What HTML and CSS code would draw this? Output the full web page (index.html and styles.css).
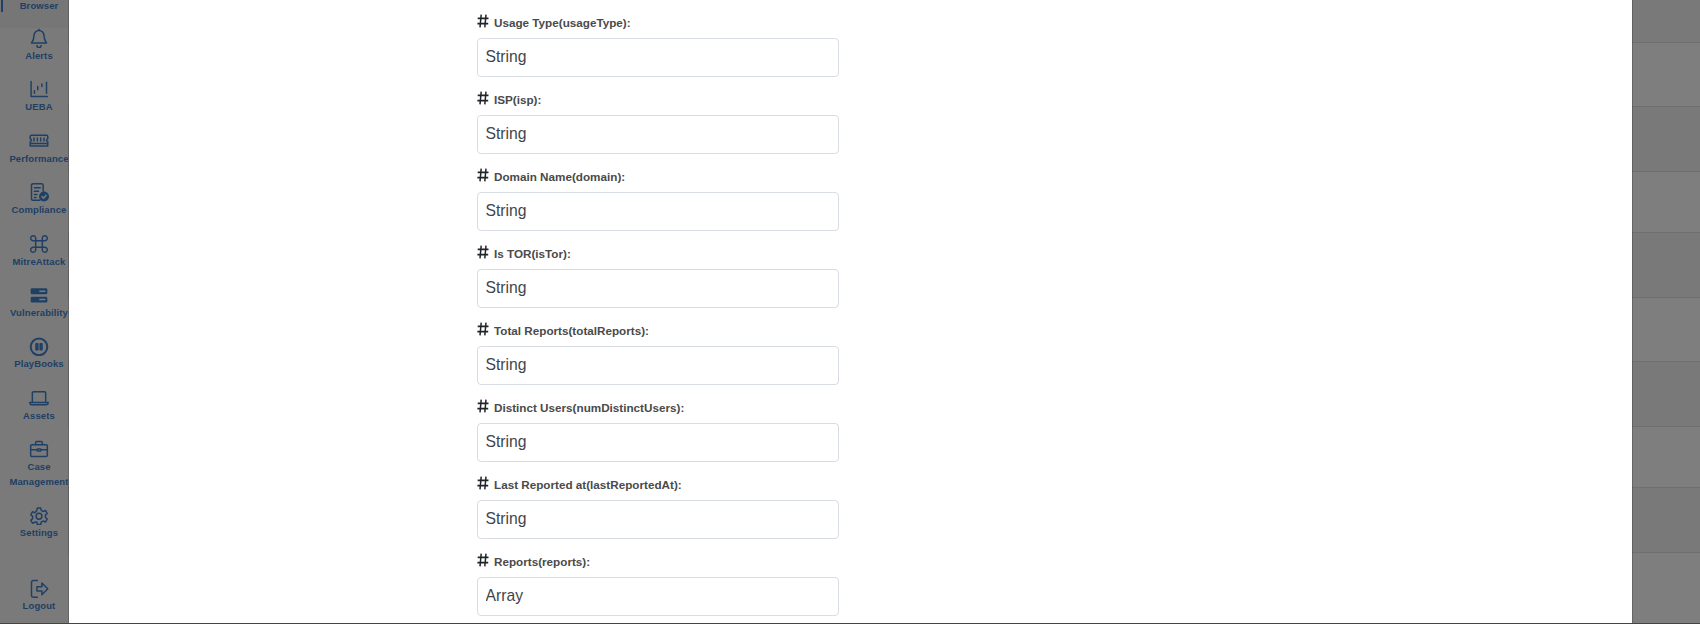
FILE: index.html
```html
<!DOCTYPE html>
<html lang="en">
<head>
<meta charset="utf-8">
<title>Fields</title>
<link rel="stylesheet" href="styles.css">
</head>
<body>
<div class="app">
  <nav class="sidebar">
    <div class="active-bar"></div>
    <a class="nav-item nav-browser"><span>Browser</span></a>
    <a class="nav-item"><svg viewBox="0 0 24 24"><path d="M12 3a6 6 0 0 0-6 6c0 5-1.500 7-3 9h18c-1.500-2-3-4-3-9a6 6 0 0 0-6-6zM12 1.500V3M9.500 21a2.500 2.500 0 0 0 5 0"/></svg><span>Alerts</span></a>
    <a class="nav-item"><svg viewBox="0 0 24 24"><path d="M2.500 3v18h19.500M21 4v13M15.500 6v3M10.500 9v4M6.500 14v3" /></svg><span>UEBA</span></a>
    <a class="nav-item"><svg viewBox="0 0 24 24"><path d="M3 5h18a1.500 1.500 0 0 1 1.500 1.500v3a1.500 1.500 0 0 0 0 3V18H1.500v-5.500a1.500 1.500 0 0 0 0-3v-3A1.500 1.500 0 0 1 3 5zM1.500 15h21M6 8.500V12M10 8.500V12M14 8.500V12M18 8.500V12"/></svg><span>Performance</span></a>
    <a class="nav-item"><svg viewBox="0 0 24 24"><path d="M13 22H5a2 2 0 0 1-2-2V4a2 2 0 0 1 2-2h10a2 2 0 0 1 2 2v7M6.500 7h7M6.500 11h5M6.500 15h3M6.500 18.500h2"/><circle class="fill" cx="18" cy="17.500" r="6"/><path class="knock" d="M15.500 17.500l2 2 3-3.500"/></svg><span>Compliance</span></a>
    <a class="nav-item"><svg viewBox="0 0 24 24"><path d="M8 8h8v8H8zM8 8H5.500A3 3 0 1 1 8 5.500zM16 8V5.500A3 3 0 1 1 18.500 8zM16 16h2.500a3 3 0 1 1-2.500 2.500zM8 16v2.500A3 3 0 1 1 5.500 16z"/></svg><span>MitreAttack</span></a>
    <a class="nav-item"><svg viewBox="0 0 24 24"><rect class="fill" x="2" y="4" width="20" height="7" rx="1.500"/><rect class="fill" x="2" y="14" width="20" height="7" rx="1.500"/><path class="knock" d="M13 7.500h6M13 17.500h6"/></svg><span>Vulnerability</span></a>
    <a class="nav-item"><svg viewBox="0 -1 24 24"><circle class="thick" cx="12" cy="12" r="10"/><rect class="fill" x="7.500" y="7.500" width="4" height="9" rx="1"/><rect class="fill" x="12.500" y="7.500" width="4" height="9" rx="1"/></svg><span>PlayBooks</span></a>
    <a class="nav-item"><svg viewBox="0 0 24 24"><path d="M4 17V6a1.500 1.500 0 0 1 1.500-1.500h13A1.500 1.500 0 0 1 20 6v11M1 17.500h22V18a2 2 0 0 1-2 2H3a2 2 0 0 1-2-2z"/></svg><span>Assets</span></a>
    <a class="nav-item nav-case"><svg viewBox="0 0 24 24"><path d="M3.500 7h17A1.500 1.500 0 0 1 22 8.500v11a1.500 1.500 0 0 1-1.500 1.500h-17A1.500 1.500 0 0 1 2 19.500v-11A1.500 1.500 0 0 1 3.500 7zM8 7V4.500A1.500 1.500 0 0 1 9.500 3h5A1.500 1.500 0 0 1 16 4.500V7M2 13h8M14 13h8M10 12h4v2.500h-4z"/></svg><span>Case<br>Management</span></a>
    <a class="nav-item"><svg viewBox="0 -1.500 24 24"><circle cx="12" cy="12" r="3.500"/><path d="M10 2h4l.6 3 2.400 1.200 2.900-1 2 3.500-2.300 2 .1 1.300-.1 1.300 2.300 2-2 3.500-2.900-1-2.400 1.200-.6 3h-4l-.6-3L7 19.300l-2.900 1-2-3.500 2.300-2-.1-1.300.1-1.300-2.300-2 2-3.500 2.900 1L9.400 5z"/></svg><span>Settings</span></a>
    <a class="nav-item nav-logout"><svg viewBox="0 -1 24 24"><path d="M10 2H5a2 2 0 0 0-2 2v16a2 2 0 0 0 2 2h5M9.500 9.500h6V5l7 7-7 7v-4.500h-6z"/></svg><span>Logout</span></a>
  </nav>
  <main class="content">
    <div class="row row-a h1"></div>
    <div class="row row-b h2"></div>
    <div class="row row-a h3"></div>
    <div class="row row-b h4"></div>
    <div class="row row-a h3"></div>
    <div class="row row-b h1b"></div>
    <div class="row row-a h3"></div>
    <div class="row row-b h5"></div>
    <div class="row row-a h3"></div>
    <div class="row row-b h6"></div>
  </main>
</div>
<div class="backdrop"></div>
<section class="modal">
  <form class="form">
    <div class="field"><label class="label"><svg class="hash" viewBox="0 0 12 12" preserveAspectRatio="none"><path d="M4.200.5L3 11.500M9 .5L7.800 11.500M.7 3.800h10.800M.4 8.200h10.800"/></svg>Usage Type(usageType):</label><input class="input" value="String"></div>
    <div class="field"><label class="label"><svg class="hash" viewBox="0 0 12 12" preserveAspectRatio="none"><path d="M4.200.5L3 11.500M9 .5L7.800 11.500M.7 3.800h10.800M.4 8.200h10.800"/></svg>ISP(isp):</label><input class="input" value="String"></div>
    <div class="field"><label class="label"><svg class="hash" viewBox="0 0 12 12" preserveAspectRatio="none"><path d="M4.200.5L3 11.500M9 .5L7.800 11.500M.7 3.800h10.800M.4 8.200h10.800"/></svg>Domain Name(domain):</label><input class="input" value="String"></div>
    <div class="field"><label class="label"><svg class="hash" viewBox="0 0 12 12" preserveAspectRatio="none"><path d="M4.200.5L3 11.500M9 .5L7.800 11.500M.7 3.800h10.800M.4 8.200h10.800"/></svg>Is TOR(isTor):</label><input class="input" value="String"></div>
    <div class="field"><label class="label"><svg class="hash" viewBox="0 0 12 12" preserveAspectRatio="none"><path d="M4.200.5L3 11.500M9 .5L7.800 11.500M.7 3.800h10.800M.4 8.200h10.800"/></svg>Total Reports(totalReports):</label><input class="input" value="String"></div>
    <div class="field"><label class="label"><svg class="hash" viewBox="0 0 12 12" preserveAspectRatio="none"><path d="M4.200.5L3 11.500M9 .5L7.800 11.500M.7 3.800h10.800M.4 8.200h10.800"/></svg>Distinct Users(numDistinctUsers):</label><input class="input" value="String"></div>
    <div class="field"><label class="label"><svg class="hash" viewBox="0 0 12 12" preserveAspectRatio="none"><path d="M4.200.5L3 11.500M9 .5L7.800 11.500M.7 3.800h10.800M.4 8.200h10.800"/></svg>Last Reported at(lastReportedAt):</label><input class="input" value="String"></div>
    <div class="field"><label class="label"><svg class="hash" viewBox="0 0 12 12" preserveAspectRatio="none"><path d="M4.200.5L3 11.500M9 .5L7.800 11.500M.7 3.800h10.800M.4 8.200h10.800"/></svg>Reports(reports):</label><input class="input" value="Array"></div>
  </form>
</section>
<div class="page-edge"></div>
</body>
</html>
```
FILE: styles.css
```css
* { box-sizing: border-box; }
html, body { margin: 0; height: 624px; overflow: hidden; background: #fff; }
body { font-family: "Liberation Sans", Arial, sans-serif; }

.app { display: flex; height: 624px; }

.sidebar {
  position: relative;
  width: 68px;
  flex: none;
  height: 624px;
  background: #f5f5f5;
  display: flex;
  flex-direction: column;
  align-items: flex-start;
  overflow: hidden;
  color: #3f7fc9;
}
.active-bar { position: absolute; left: 1px; top: 0; width: 2px; height: 12px; background: #3f7fc9; }
.nav-item {
  display: flex;
  flex-direction: column;
  align-items: center;
  flex: none;
  width: 78px;
  height: 51.4px;
  font-size: 9.500px;
  font-weight: 700;
  line-height: 15px;
  text-align: center;
  letter-spacing: .1px;
}
.nav-item svg {
  width: 20px;
  height: 20px;
  margin-bottom: 0;
  fill: none;
  stroke: currentColor;
  stroke-width: 1.800;
  stroke-linejoin: round;
  stroke-linecap: round;
}
.nav-item svg .fill { fill: currentColor; stroke: none; }
.nav-item svg .thick { stroke-width: 2.400; }
.nav-item svg .knock { stroke: #f5f5f5; stroke-width: 1.800; }
.nav-browser { height: 30px; margin-top: -2px; background: #ececec; }
.nav-case { height: 65.500px; }
.nav-logout { margin-top: auto; height: 46px; }

.content { flex: 1; display: flex; flex-direction: column; }
.row { border-bottom: 1px solid #dedede; flex: none; }
.row-a { background: #f2f2f2; }
.row-b { background: #fcfcfc; }
.h1 { height: 43px; }
.h2 { height: 64px; }
.h3 { height: 65px; }
.h4 { height: 61px; }
.h1b { height: 64px; }
.h5 { height: 61px; }
.h6 { height: 74px; border-bottom: 0; }

.backdrop {
  position: fixed;
  inset: 0;
  background: rgba(0, 0, 0, .5);
}
.modal {
  position: fixed;
  left: 68px;
  top: 0;
  width: 1565px;
  height: 624px;
  background: #fff;
  border-left: 1px solid rgba(0, 0, 0, .2);
  border-right: 1px solid rgba(0, 0, 0, .2);
  background-clip: padding-box;
  overflow: hidden;
  padding: 13px 0 0 408px;
}
.form { width: 362px; display: flex; flex-direction: column; }
.field { height: 77px; flex: none; }
.label {
  display: flex;
  align-items: center;
  height: 25px;
  padding-bottom: 7px;
  font-size: 11.700px;
  font-weight: 700;
  color: #4a4a4a;
}
.hash {
  width: 12px;
  height: 14px;
  margin-right: 5px;
  fill: none;
  stroke: #212529;
  stroke-width: 1.500;
  position: relative;
  top: -1px;
}
.input {
  display: block;
  width: 100%;
  height: 39px;
  border: 1px solid #d8dce3;
  border-radius: 4px;
  padding: 0 7.500px 2px;
  font: 15.700px "Liberation Sans", Arial, sans-serif;
  color: #40454b;
  background: #fff;
}
.page-edge { position: fixed; left: 0; right: 0; bottom: 0; height: 1px; background: #444; }
```
